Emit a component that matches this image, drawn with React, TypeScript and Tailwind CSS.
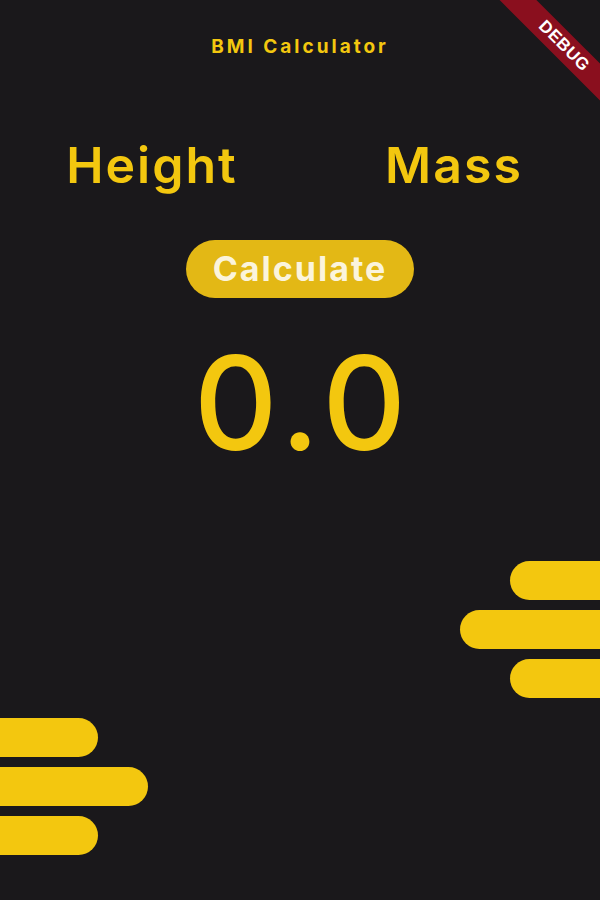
import React from "react";

export default function App() {
  const font = { fontFamily: "Inter, 'Noto Sans', sans-serif" };
  return (
    <div
      className="relative w-[600px] h-[900px] overflow-hidden bg-[#1a181b] text-[#f3c70f]"
      style={font}
    >
      <div className="absolute top-[33px] right-[-49px] w-[170px] h-[26px] rotate-45 bg-[#8a0f1e] flex items-center justify-center">
        <span className="text-white text-[17px] font-extrabold tracking-[0.5px] font-['Liberation_Sans',sans-serif]">
          DEBUG
        </span>
      </div>

      <div className="pt-[37px] flex justify-center">
        <span className="text-[19px] font-bold leading-[19px] tracking-[3px]">BMI Calculator</span>
      </div>

      <div className="mt-[84px] grid grid-cols-2">
        <div className="flex justify-center pl-[4px]">
          <span className="text-[50px] font-semibold leading-[50px] tracking-[2px]">Height</span>
        </div>
        <div className="flex justify-center pl-[8px]">
          <span className="text-[50px] font-semibold leading-[50px] tracking-[2px]">Mass</span>
        </div>
      </div>

      <div className="mt-[50px] flex justify-center">
        <div className="w-[228px] h-[58px] rounded-full bg-[#e3b815] flex items-center justify-center">
          <span className="text-[34px] font-bold text-[#fbf4dc] leading-none tracking-[2px]">Calculate</span>
        </div>
      </div>

      <div className="mt-[40px] flex justify-center pl-[6px]">
        <span className="text-[130px] font-[550] leading-[130px] tracking-[6px]">0.0</span>
      </div>

      <div className="mt-[93px] flex flex-col items-end gap-[10px]">
        <div className="w-[90px] h-[39px] rounded-l-full bg-[#f3c70f]" />
        <div className="w-[140px] h-[39px] rounded-l-full bg-[#f3c70f]" />
        <div className="w-[90px] h-[39px] rounded-l-full bg-[#f3c70f]" />
      </div>

      <div className="mt-[20px] flex flex-col items-start gap-[10px]">
        <div className="w-[98px] h-[39px] rounded-r-full bg-[#f3c70f]" />
        <div className="w-[148px] h-[39px] rounded-r-full bg-[#f3c70f]" />
        <div className="w-[98px] h-[39px] rounded-r-full bg-[#f3c70f]" />
      </div>
    </div>
  );
}
